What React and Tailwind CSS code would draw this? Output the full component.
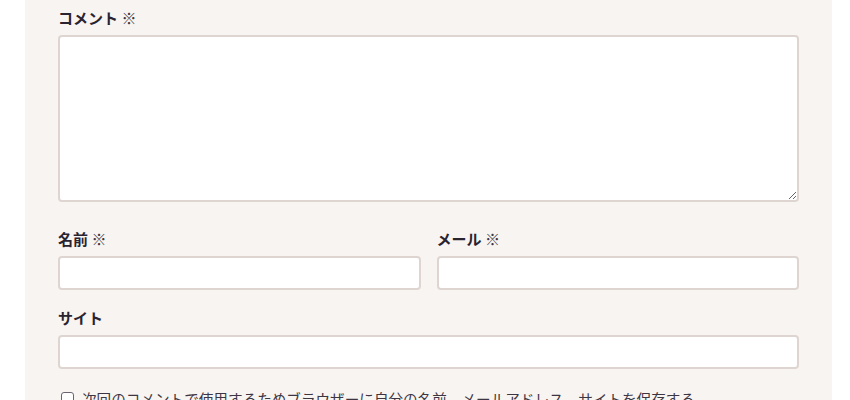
import React from 'react';

const font = { fontFamily: '"Noto Sans CJK JP", "Noto Sans", sans-serif' };

const Label = ({ children, required }) => (
  <label className="block text-[15px] leading-[21px] font-bold text-[#2a2330] mb-[7px]">
    {children}
    {required && <span className="font-normal text-[#3d3642]"> ※</span>}
  </label>
);

const inputCls =
  'block w-full h-[34px] bg-white border-2 border-[#ded5d1] rounded-[4px] outline-none';

const App = () => {
  return (
    <div className="bg-white w-[850px] h-[400px] overflow-hidden" style={font}>
      <div className="ml-[25px] w-[807px] h-[400px] bg-[#f8f4f2] px-[33px] pt-[7px]">
        <Label required>コメント</Label>
        <textarea className="block w-full h-[167px] bg-white border-2 border-[#ded5d1] rounded-[4px] outline-none" />

        <div className="grid grid-cols-2 gap-x-[16px] mt-[26px]">
          <div>
            <Label required>名前</Label>
            <input type="text" className={inputCls} />
          </div>
          <div>
            <Label required>メール</Label>
            <input type="email" className={inputCls} />
          </div>
        </div>

        <div className="mt-[17px]">
          <Label>サイト</Label>
          <input type="url" className={inputCls} />
        </div>

        <div className="mt-[19px] flex items-center gap-[8px] pl-[3px]">
          <span className="block w-[13px] h-[13px] border border-[#6b6470] rounded-[3px] bg-white shrink-0" />
          <span className="text-[14.6px] leading-[21px] text-[#3d3642]">
            次回のコメントで使用するためブラウザーに自分の名前、メールアドレス、サイトを保存する。
          </span>
        </div>
      </div>
    </div>
  );
};

export default App;
